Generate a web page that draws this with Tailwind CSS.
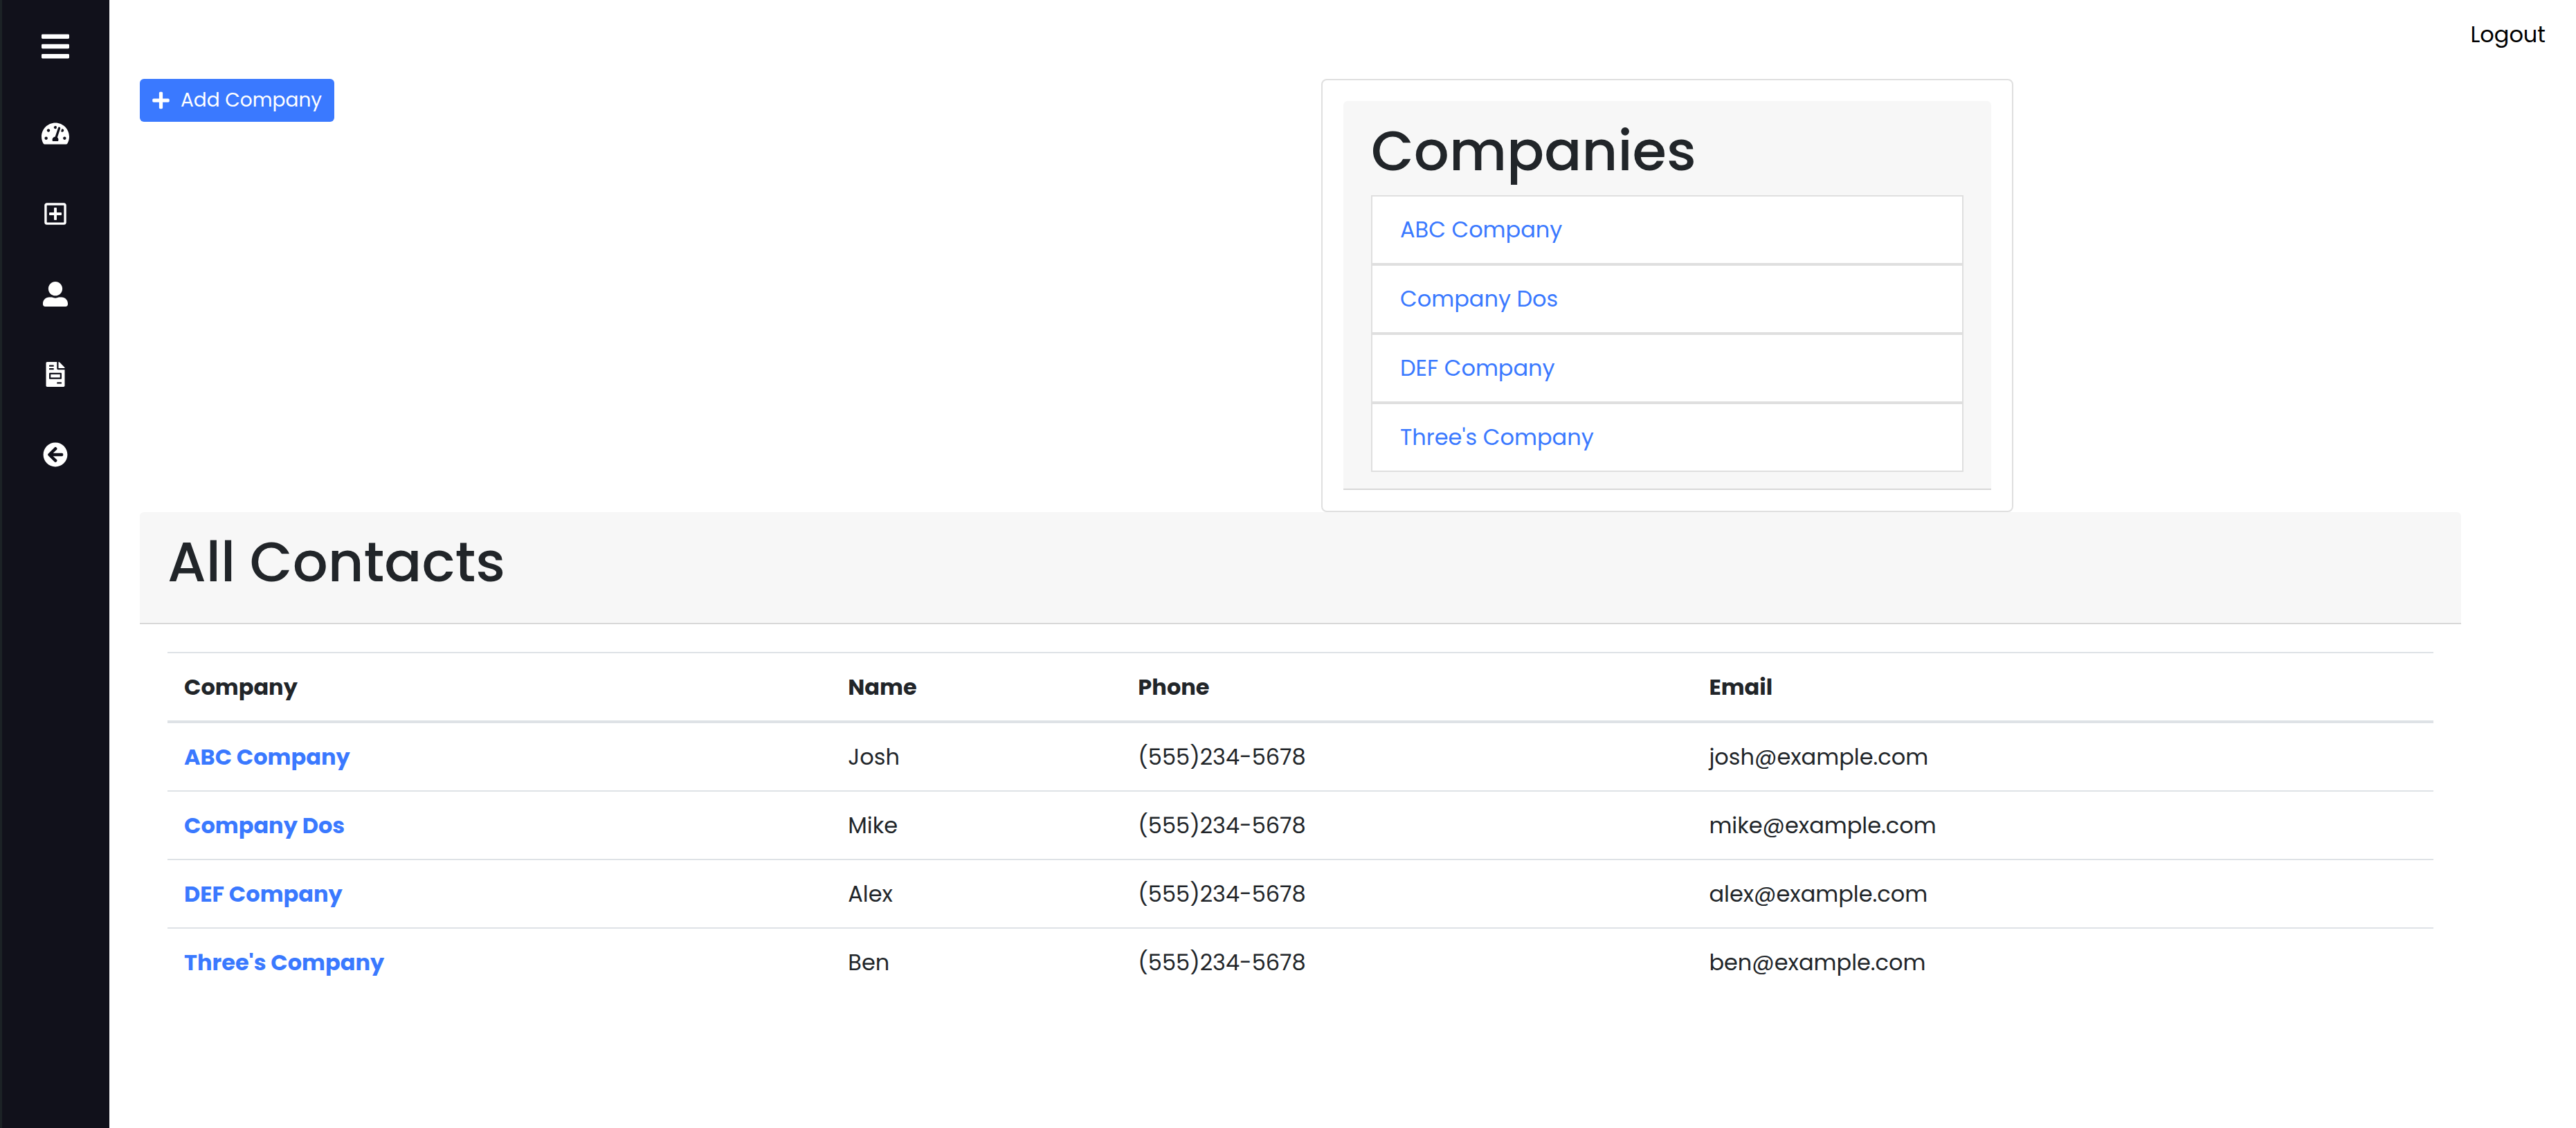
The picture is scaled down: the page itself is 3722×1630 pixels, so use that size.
<!DOCTYPE html>
<html lang="en">
<head>
<meta charset="utf-8">
<meta name="viewport" content="width=device-width, initial-scale=1">
<title>Contacts</title>
<script src="https://cdn.jsdelivr.net/npm/@tailwindcss/browser@4"></script>
</head>
<body class="flex min-h-screen bg-white font-[Poppins,Inter,sans-serif] text-[32px] leading-[48px] text-[#212529]">
  <aside class="w-[158px] shrink-0 border-l-3 border-[#1c2226] bg-[#11111b] text-white">
    <nav class="flex flex-col items-center pt-11 pr-px" aria-label="Main">
      <button type="button" aria-label="Toggle menu">
        <svg class="h-[46px] w-10" viewBox="0 0 448 512" fill="currentColor"><path d="M16 132h416c8.837 0 16-7.163 16-16V76c0-8.837-7.163-16-16-16H16C7.163 60 0 67.163 0 76v40c0 8.837 7.163 16 16 16zm0 160h416c8.837 0 16-7.163 16-16v-40c0-8.837-7.163-16-16-16H16c-8.837 0-16 7.163-16 16v40c0 8.837 7.163 16 16 16zm0 160h416c8.837 0 16-7.163 16-16v-40c0-8.837-7.163-16-16-16H16c-8.837 0-16 7.163-16 16v40c0 8.837 7.163 16 16 16z"/></svg>
      </button>
      <div class="mt-[85px] flex flex-col items-center gap-20">
        <a href="#" aria-label="Dashboard"><svg class="h-9 w-10" viewBox="0 0 576 512" fill="currentColor"><path d="M288 32C128.94 32 0 160.94 0 320c0 52.8 14.25 102.26 39.06 144.8 5.61 9.62 16.3 15.2 27.44 15.2h443c11.14 0 21.83-5.58 27.44-15.2C561.75 422.26 576 372.8 576 320c0-159.06-128.94-288-288-288zm0 64c14.71 0 26.58 10.13 30.32 23.65-1.11 2.26-2.64 4.23-3.45 6.67l-9.22 27.67c-5.13 3.49-10.97 6.01-17.64 6.01-17.67 0-32-14.33-32-32S270.33 96 288 96zM96 384c-17.67 0-32-14.33-32-32s14.33-32 32-32 32 14.33 32 32-14.33 32-32 32zm48-160c-17.67 0-32-14.33-32-32s14.33-32 32-32 32 14.33 32 32-14.33 32-32 32zm246.77-72.41l-61.33 184C343.13 347.33 352 364.54 352 384c0 11.72-3.38 22.55-8.88 32H232.88c-5.5-9.45-8.88-20.28-8.88-32 0-33.94 26.5-61.43 59.9-63.59l61.34-184.01c4.17-12.56 17.73-19.45 30.36-15.17 12.57 4.19 19.35 17.79 15.17 30.36zm14.66 57.2l15.52-46.55c3.47-1.29 7.13-2.23 11.05-2.23 17.67 0 32 14.33 32 32s-14.33 32-32 32c-11.38-.01-20.89-6.28-26.57-15.22zM480 384c-17.67 0-32-14.33-32-32s14.33-32 32-32 32 14.33 32 32-14.33 32-32 32z"/></svg></a>
        <a href="#" aria-label="Add"><svg class="h-9 w-8" viewBox="0 0 448 512" fill="currentColor"><path d="M352 240v32c0 6.6-5.4 12-12 12h-88v88c0 6.6-5.4 12-12 12h-32c-6.6 0-12-5.4-12-12v-88h-88c-6.6 0-12-5.4-12-12v-32c0-6.6 5.4-12 12-12h88v-88c0-6.6 5.4-12 12-12h32c6.6 0 12 5.4 12 12v88h88c6.6 0 12 5.4 12 12zm96-160v352c0 26.5-21.5 48-48 48H48c-26.5 0-48-21.5-48-48V80c0-26.5 21.5-48 48-48h352c26.5 0 48 21.5 48 48zm-48 346V86c0-3.3-2.7-6-6-6H54c-3.3 0-6 2.7-6 6v340c0 3.3 2.7 6 6 6h340c3.3 0 6-2.7 6-6z"/></svg></a>
        <a href="#" aria-label="Contacts"><svg class="size-9" viewBox="0 0 512 512" fill="currentColor"><path d="M256 288c79.5 0 144-64.5 144-144S335.5 0 256 0 112 64.5 112 144s64.5 144 144 144zm128 32h-55.1c-22.2 10.2-46.9 16-72.9 16s-50.6-5.8-72.9-16H128C57.3 320 0 377.3 0 448v16c0 26.5 21.5 48 48 48h416c26.5 0 48-21.5 48-48v-16c0-70.7-57.3-128-128-128z"/></svg></a>
        <a href="#" aria-label="Invoices"><svg class="h-9 w-7" viewBox="0 0 384 512" fill="currentColor"><path d="M288 256H96v64h192v-64zm89-151L279.1 7c-4.5-4.5-10.6-7-17-7H256v128h128v-6.1c0-6.3-2.5-12.4-7-16.9zm-153 31V0H24C10.7 0 0 10.7 0 24v464c0 13.3 10.7 24 24 24h336c13.3 0 24-10.7 24-24V160H248c-13.2 0-24-10.8-24-24zM64 72c0-4.42 3.58-8 8-8h80c4.42 0 8 3.58 8 8v16c0 4.42-3.58 8-8 8H72c-4.42 0-8-3.58-8-8V72zm0 64c0-4.42 3.58-8 8-8h80c4.42 0 8 3.58 8 8v16c0 4.42-3.58 8-8 8H72c-4.42 0-8-3.58-8-8v-16zm256 304c0 4.42-3.58 8-8 8h-80c-4.42 0-8-3.58-8-8v-16c0-4.42 3.58-8 8-8h80c4.42 0 8 3.58 8 8v16zm0-200v96c0 8.84-7.16 16-16 16H80c-8.84 0-16-7.16-16-16v-96c0-8.84 7.16-16 16-16h224c8.84 0 16 7.16 16 16z"/></svg></a>
        <a href="#" aria-label="Back"><svg class="size-9" viewBox="0 0 512 512" fill="currentColor"><path d="M256 504C119 504 8 393 8 256S119 8 256 8s248 111 248 248-111 248-248 248zm28.9-143.6L209.4 288H392c13.3 0 24-10.7 24-24v-16c0-13.3-10.7-24-24-24H209.4l75.5-72.4c9.7-9.3 9.9-24.8.4-34.3l-11-10.9c-9.4-9.4-24.6-9.4-33.9 0L107.7 239c-9.4 9.4-9.4 24.6 0 33.9l132.7 132.7c9.4 9.4 24.6 9.4 33.9 0l11-10.9c9.5-9.5 9.3-25-.4-34.3z"/></svg></a>
      </div>
    </nav>
  </aside>

  <div class="min-w-0 flex-1">
    <header class="flex justify-end px-11 pt-[26px] pb-10">
      <a href="#" class="text-black">Logout</a>
    </header>

    <main class="pr-[166px] pl-11">
      <div class="grid grid-cols-2 items-start">
        <div>
          <button type="button" class="flex h-[62px] items-center gap-4 rounded-md bg-[#3a79ff] px-[18px] text-[28px] text-white">
            <svg class="h-7 w-[25px]" viewBox="0 0 448 512" fill="currentColor" aria-hidden="true"><path d="M416 208H272V64c0-17.67-14.33-32-32-32h-32c-17.67 0-32 14.33-32 32v144H32c-17.67 0-32 14.33-32 32v32c0 17.67 14.33 32 32 32h144v144c0 17.67 14.33 32 32 32h32c17.67 0 32-14.33 32-32V304h144c17.67 0 32-14.33 32-32v-32c0-17.67-14.33-32-32-32z"/></svg>
            Add Company
          </button>
        </div>
        <div class="pl-[30px]">
          <section class="max-w-[1000px] rounded-lg border-2 border-[#dfdfdf] p-[30px]">
            <div class="rounded-t-md border-b-2 border-[#d8d8d8] bg-[#f7f7f7] px-10 py-6">
              <h1 class="mb-4 text-[80px] leading-[96px] font-medium">Companies</h1>
              <ul class="text-[#3a79ff]">
                <li class="border-2 border-[#dfdfdf] bg-white px-10 py-6"><a href="#">ABC Company</a></li>
                <li class="border-2 border-[#dfdfdf] bg-white px-10 py-6"><a href="#">Company Dos</a></li>
                <li class="border-2 border-[#dfdfdf] bg-white px-10 py-6"><a href="#">DEF Company</a></li>
                <li class="border-2 border-[#dfdfdf] bg-white px-10 py-6"><a href="#">Three's Company</a></li>
              </ul>
            </div>
          </section>
        </div>
      </div>

      <section>
        <div class="rounded-t-md border-b-2 border-[#d8d8d8] bg-[#f7f7f7] px-10 pt-6 pb-10">
          <h1 class="text-[80px] leading-[96px] font-medium">All Contacts</h1>
        </div>
        <div class="p-10">
          <table class="w-full table-fixed border-separate border-spacing-0 text-left leading-[49px]">
            <thead>
              <tr>
                <th scope="col" class="w-[29.3%] border-t-2 border-b-4 border-[#dee2e6] p-6 font-bold">Company</th>
                <th scope="col" class="w-[12.8%] border-t-2 border-b-4 border-[#dee2e6] p-6 font-bold">Name</th>
                <th scope="col" class="w-[25.2%] border-t-2 border-b-4 border-[#dee2e6] p-6 font-bold">Phone</th>
                <th scope="col" class="border-t-2 border-b-4 border-[#dee2e6] p-6 font-bold">Email</th>
              </tr>
            </thead>
            <tbody>
              <tr>
                <th scope="row" class="p-6 font-bold text-[#3a79ff]"><a href="#">ABC Company</a></th>
                <td class="p-6">Josh</td><td class="p-6">(555)234-5678</td><td class="p-6">josh@example.com</td>
              </tr>
              <tr>
                <th scope="row" class="border-t-2 border-[#dee2e6] p-6 font-bold text-[#3a79ff]"><a href="#">Company Dos</a></th>
                <td class="border-t-2 border-[#dee2e6] p-6">Mike</td><td class="border-t-2 border-[#dee2e6] p-6">(555)234-5678</td><td class="border-t-2 border-[#dee2e6] p-6">mike@example.com</td>
              </tr>
              <tr>
                <th scope="row" class="border-t-2 border-[#dee2e6] p-6 font-bold text-[#3a79ff]"><a href="#">DEF Company</a></th>
                <td class="border-t-2 border-[#dee2e6] p-6">Alex</td><td class="border-t-2 border-[#dee2e6] p-6">(555)234-5678</td><td class="border-t-2 border-[#dee2e6] p-6">alex@example.com</td>
              </tr>
              <tr>
                <th scope="row" class="border-t-2 border-[#dee2e6] p-6 font-bold text-[#3a79ff]"><a href="#">Three's Company</a></th>
                <td class="border-t-2 border-[#dee2e6] p-6">Ben</td><td class="border-t-2 border-[#dee2e6] p-6">(555)234-5678</td><td class="border-t-2 border-[#dee2e6] p-6">ben@example.com</td>
              </tr>
            </tbody>
          </table>
        </div>
      </section>
    </main>
  </div>
</body>
</html>
